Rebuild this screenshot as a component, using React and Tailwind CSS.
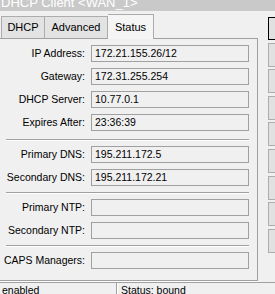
const rows = [
  [{ label: 'IP Address:', value: '172.21.155.26/12' }, { label: 'Gateway:', value: '172.31.255.254' }, { label: 'DHCP Server:', value: '10.77.0.1' }, { label: 'Expires After:', value: '23:36:39' }],
  [{ label: 'Primary DNS:', value: '195.211.172.5' }, { label: 'Secondary DNS:', value: '195.211.172.21' }],
  [{ label: 'Primary NTP:', value: '' }, { label: 'Secondary NTP:', value: '' }],
  [{ label: 'CAPS Managers:', value: '' }],
];

function Field({ label, value }) {
  return (
    <div className="flex items-center h-[17px]">
      <div className="w-[88px] pr-[3px] text-right whitespace-nowrap">{label}</div>
      <div className="ml-[3px] w-[158px] h-[17px] border border-[#a0a0a0] bg-[#f0f0f0] px-[3px] leading-[15px] whitespace-nowrap">
        {value}
      </div>
    </div>
  );
}

function Separator() {
  return (
    <div className="ml-[6px] w-[243px]">
      <div className="h-px bg-[#a0a0a0]" />
      <div className="h-px bg-white" />
    </div>
  );
}

export default function App() {
  return (
    <div
      className="w-[275px] h-[294px] overflow-hidden bg-[#f0f0f0] text-[10.5px] text-black flex flex-col"
      style={{ fontFamily: '"Liberation Sans", Arial, sans-serif' }}
    >
      {/* Title bar, clipped at top */}
      <div className="h-[11px] shrink-0 bg-[#c9c9c9] overflow-hidden">
        <div className="text-white text-[13px] leading-[13px] -mt-[4px] pl-[1px] whitespace-nowrap">
          DHCP Client &lt;WAN_1&gt;
        </div>
      </div>

      <div className="flex flex-1 min-h-0">
        {/* Tabs + panel */}
        <div className="w-[258px] shrink-0 flex flex-col pt-[2px]">
          <div className="flex items-end h-[25px] pl-[1px]">
            <div className="h-[22px] w-[44px] border border-b-0 border-[#acacac] bg-[#e3e3e3] flex items-center justify-center text-[11px]">
              DHCP
            </div>
            <div className="h-[22px] w-[63px] border border-l-0 border-b-0 border-[#acacac] bg-[#e3e3e3] flex items-center justify-center text-[11px]">
              Advanced
            </div>
            <div className="h-[25px] w-[46px] border border-l-0 border-b-0 border-[#acacac] bg-[#f5f5f5] flex items-center justify-center text-[11px] -mb-px relative z-10">
              Status
            </div>
          </div>
          <div className="h-[243px] border border-l-0 border-[#a0a0a0] bg-[#f0f0f0] pt-[6px] flex flex-col">
            <div className="flex flex-col gap-[6px]">
              {rows[0].map((r) => <Field key={r.label} {...r} />)}
            </div>
            <div className="mt-[8px]"><Separator /></div>
            <div className="mt-[5px] flex flex-col gap-[6px]">
              {rows[1].map((r) => <Field key={r.label} {...r} />)}
            </div>
            <div className="mt-[6px]"><Separator /></div>
            <div className="mt-[5px] flex flex-col gap-[6px]">
              {rows[2].map((r) => <Field key={r.label} {...r} />)}
            </div>
            <div className="mt-[6px]"><Separator /></div>
            <div className="mt-[5px] flex flex-col gap-[6px]">
              {rows[3].map((r) => <Field key={r.label} {...r} />)}
            </div>
          </div>
          <div className="h-px w-[258px] bg-white" />
        </div>

        {/* Right-side buttons */}
        <div className="ml-[10px] pt-[6px] flex flex-col gap-[2.6px]">
          <div className="h-[23px] w-[12px] border border-r-0 border-black bg-[#e1e1e1]" />
          {[0, 1, 2, 3, 4, 5, 6, 7].map((i) => (
            <div key={i} className="h-[24px] w-[12px] border border-r-0 border-[#adadad] bg-[#e1e1e1]" />
          ))}
        </div>
      </div>

      {/* Status bar */}
      <div className="h-[12px] shrink-0 flex border-t border-[#a0a0a0] overflow-hidden">
        <div className="w-[117px] border-r border-[#a0a0a0] pl-[2px] leading-[14px] whitespace-nowrap">enabled</div>
        <div className="border-l border-white pl-[3px] leading-[14px] whitespace-nowrap">Status: bound</div>
      </div>
    </div>
  );
}
